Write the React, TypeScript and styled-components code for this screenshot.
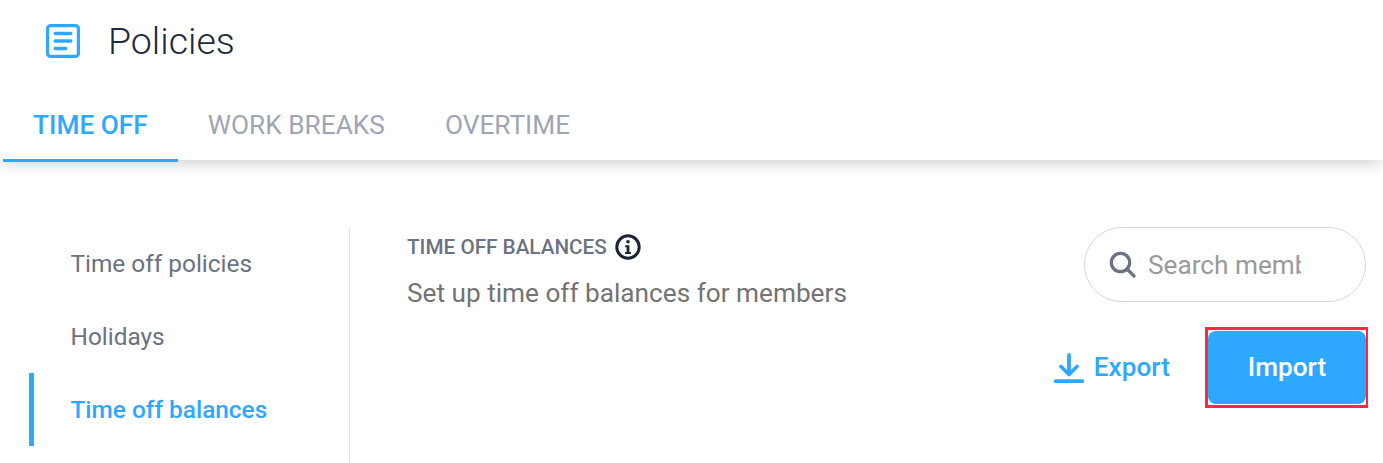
import styled, { createGlobalStyle } from "styled-components";

const GlobalStyle = createGlobalStyle`
  html, body {
    margin: 0;
    padding: 0;
    background: #fff;
    font-family: Roboto, "Liberation Sans", sans-serif;
    overflow: hidden;
  }
`;

export default function App() {
  return (
    <>
      <GlobalStyle />
      <Header>
        <PolicyIcon viewBox="0 0 34 34">
          <rect x="1.6" y="1.6" width="30.8" height="30.8" rx="3" fill="none" stroke="#2ea8ff" strokeWidth="3.2" />
          <path d="M9.200 9.500h15.600M9.200 17h15.600M9.200 24.500h10.500" stroke="#2ea8ff" strokeWidth="3.400" strokeLinecap="round" />
        </PolicyIcon>
        <Title>Policies</Title>
      </Header>

      <TabBar>
        <Tab $active>TIME OFF</Tab>
        <Tab>WORK BREAKS</Tab>
        <Tab>OVERTIME</Tab>
      </TabBar>

      <Body>
        <Sidebar>
          <SideItem>Time off policies</SideItem>
          <SideItem>Holidays</SideItem>
          <SideItem $active>Time off balances</SideItem>
        </Sidebar>

        <Content>
          <TopRow>
            <div>
              <SectionTitle>
                TIME OFF BALANCES
                <InfoIcon viewBox="0 0 26 26">
                  <circle cx="13" cy="13" r="11.2" fill="none" stroke="#1b2438" strokeWidth="3" />
                  <circle cx="13" cy="7.800" r="1.800" fill="#1b2438" />
                  <path d="M10.200 11.200h4.200v6.700h1.500v2H10.100v-2h1.500v-4.700h-1.400z" fill="#1b2438" />
                </InfoIcon>
              </SectionTitle>
              <Subtitle>Set up time off balances for members</Subtitle>
            </div>
            <SearchBox>
              <svg width="27" height="27" viewBox="0 0 27 27" fill="none" stroke="#6b7280" strokeWidth="3.200" strokeLinecap="round">
                <circle cx="11.500" cy="11.500" r="9.200" />
                <path d="M18.500 18.500l6.500 6.500" />
              </svg>
              <SearchInput placeholder="Search members" readOnly />
            </SearchBox>
          </TopRow>

          <Actions>
            <ExportLink>
              <ExportIcon viewBox="0 0 30 30">
                <path d="M15 2v19M7 13.500l8 8 8-8" />
                <path d="M1.800 28.200h26.400" />
              </ExportIcon>
              Export
            </ExportLink>
            <ImportFrame>
              <ImportButton>Import</ImportButton>
            </ImportFrame>
          </Actions>
        </Content>
      </Body>
    </>
  );
}

const Header = styled.header`
  display: flex;
  align-items: center;
  height: 82px;
  padding-left: 46px;
  box-sizing: border-box;
`;

const PolicyIcon = styled.svg`
  width: 34px;
  height: 34px;
  margin-right: 28px;
`;

const Title = styled.h1`
  margin: 0;
  font-size: 37.5px;
  font-weight: 300;
  color: #1f2a3c;
`;

const TabBar = styled.nav`
  display: flex;
  height: 78px;
  padding-left: 3px;
  box-shadow: 0 6px 14px -2px rgba(0, 0, 0, 0.18);
  clip-path: inset(0 0 -30px 0);
`;

const Tab = styled.div<{ $active?: boolean }>`
  display: flex;
  align-items: center;
  height: 80px;
  padding: 9px 30px 0;
  font-size: 26.25px;
  font-weight: ${(p) => (p.$active ? 500 : 400)};
  color: ${(p) => (p.$active ? "#2ea8ff" : "#9ea5b3")};
  box-sizing: border-box;
  border-bottom: 3px solid ${(p) => (p.$active ? "#2ea8ff" : "transparent")};
`;

const Body = styled.main`
  display: flex;
  padding: 67px 17px 0 29px;
  height: 303px;
  box-sizing: border-box;
`;

const Sidebar = styled.aside`
  width: 320px;
  flex-shrink: 0;
  border-right: 1px solid #e4e4e4;
  box-sizing: content-box;
`;

const SideItem = styled.div<{ $active?: boolean }>`
  display: flex;
  align-items: center;
  height: 73px;
  padding-left: 36.5px;
  font-size: 24.4px;
  font-weight: ${(p) => (p.$active ? 500 : 400)};
  color: ${(p) => (p.$active ? "#2ea8ff" : "#6b7280")};
  border-left: 5px solid ${(p) => (p.$active ? "#2ea8ff" : "transparent")};
`;

const Content = styled.section`
  flex: 1;
  padding-left: 57px;
`;

const TopRow = styled.div`
  display: flex;
  justify-content: space-between;
  align-items: flex-start;
  height: 75px;
`;

const SectionTitle = styled.h2`
  display: flex;
  align-items: center;
  margin: 7px 0 0;
  font-size: 20.7px;
  font-weight: 500;
  color: #6b7280;
`;

const InfoIcon = styled.svg`
  width: 26px;
  height: 26px;
  margin-left: 8px;
`;

const Subtitle = styled.p`
  margin: 18px 0 0;
  font-size: 26.2px;
  color: #737373;
`;

const SearchBox = styled.div`
  display: flex;
  align-items: center;
  width: 282px;
  height: 75px;
  box-sizing: border-box;
  padding: 0 64px 0 24px;
  border: 1px solid #d5d7dc;
  border-radius: 38px;
`;

const SearchInput = styled.input`
  flex: 1;
  min-width: 0;
  margin-left: 12px;
  border: 0;
  outline: 0;
  padding: 0;
  font: 400 26.2px Roboto, sans-serif;
  color: #333;

  &::placeholder {
    color: #9a9a9a;
  }
`;

const Actions = styled.div`
  display: flex;
  justify-content: flex-end;
  align-items: center;
  margin-top: 25px;
  margin-right: -2px;
`;

const ExportLink = styled.a`
  display: flex;
  align-items: center;
  gap: 10px;
  margin: -2px 35px 0 0;
  font-size: 26.2px;
  font-weight: 500;
  color: #2ea8ff;
`;

const ExportIcon = styled.svg`
  width: 30px;
  height: 30px;
  margin-top: 2px;
  fill: none;
  stroke: #2ea8ff;
  stroke-width: 3.8;
  stroke-linecap: round;
  stroke-linejoin: round;
`;

const ImportFrame = styled.div`
  padding: 1px 0;
  border: 3px solid #fb2a40;
  border-right-width: 2px;
`;

const ImportButton = styled.button`
  display: block;
  width: 158px;
  height: 73px;
  padding: 0 0 2px;
  border: 0;
  border-radius: 8px;
  background: #2ea8ff;
  color: #fff;
  font: 500 26.2px Roboto, sans-serif;
`;
